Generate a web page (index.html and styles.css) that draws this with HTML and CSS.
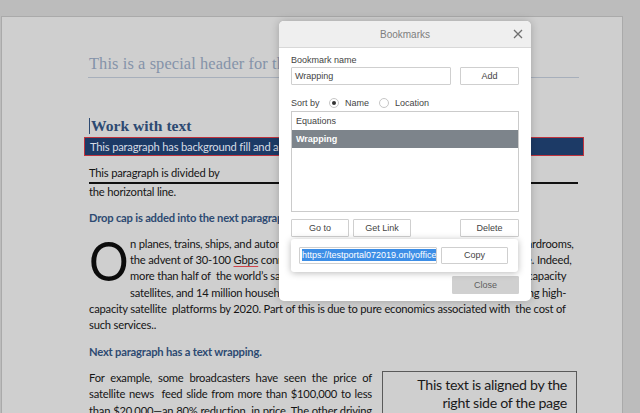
FILE: index.html
```html
<!DOCTYPE html>
<html>
<head>
<meta charset="utf-8">
<link rel="stylesheet" href="styles.css">
</head>
<body>
<div class="canvas">
  <div class="page">
    <div class="doc-header">This is a special header for the whole document</div>
    <h1 class="h-work"><span class="caret"></span>Work with text</h1>
    <p class="fill">This paragraph has background fill and a border applied to it.</p>
    <p class="plain first-plain">This paragraph is divided by</p>
    <div class="rule"></div>
    <p class="plain">the horizontal line.</p>
    <h2 class="sub">Drop cap is added into the next paragraph.</h2>
    <p class="drop-para"><span class="dropcap">O</span>n planes, trains, ships, and automobiles, in airports, in hotel lobbies, and corporate boardrooms,<br>the advent of 30-100 <span class="spell">Gbps</span> connectivity is changing the ways all people communicate. Indeed,<br>more than half of&nbsp; the world’s satellite operators are now planning on launching high-capacity<br>satellites, and 14 million households and businesses around the world will now be using high-<br>capacity satellite&nbsp; platforms by 2020. Part of this is due to pure economics associated with&nbsp; the cost of<br>such services..</p>
    <h2 class="sub sub-2">Next paragraph has a text wrapping.</h2>
    <div class="wrap">
      <p class="justified">For example, some broadcasters have seen the price of satellite news&nbsp; feed slide from more than $100,000 to less than $20,000—an 80% reduction&nbsp; in price. The other driving force is the growth of demand.</p>
      <div class="aside">This text is aligned by the<br>right side of the page</div>
    </div>
  </div>
</div>

<div class="dialog">
  <div class="dlg-head">
    <span class="dlg-title">Bookmarks</span>
    <svg class="dlg-close" width="10" height="10" viewBox="0 0 10 10"><path d="M1 1L9 9M9 1L1 9" stroke="#6f6f6f" stroke-width="1.3" fill="none"/></svg>
  </div>
  <div class="dlg-body">
    <div class="label">Bookmark name</div>
    <div class="row">
      <div class="input name-input">Wrapping</div>
      <div class="btn btn-add">Add</div>
    </div>
    <div class="sort-row">
      <span class="sort-label">Sort by</span>
      <span class="radio checked"></span><span class="radio-text">Name</span>
      <span class="radio"></span><span class="radio-text">Location</span>
    </div>
    <div class="list">
      <div class="item">Equations</div>
      <div class="item selected">Wrapping</div>
    </div>
    <div class="row actions">
      <div class="btn btn-sm">Go to</div>
      <div class="btn btn-sm btn-link">Get Link</div>
      <div class="btn btn-del">Delete</div>
    </div>
    <div class="footer">
      <div class="btn btn-close">Close</div>
    </div>
  </div>
  <div class="popover">
    <div class="input link-input"><span class="sel">https://testportal072019.onlyoffice.</span></div>
    <div class="btn btn-copy">Copy</div>
  </div>
</div>
</body>
</html>
```

FILE: styles.css
```css
html, body {
  margin: 0;
  padding: 0;
}
body {
  width: 640px;
  height: 413px;
  overflow: hidden;
  background: #bcbcbc;
  position: relative;
}
.canvas {
  padding-top: 16px;
  padding-left: 1px;
}
.page {
  width: 622px;
  height: 420px;
  background: #cfcfcf;
  border: 1px solid #aaaaaa;
  border-bottom: none;
  padding: 37px 43px 0 87px;
  box-sizing: border-box;
  font-family: Lato, "Open Sans", sans-serif;
  font-size: 11.2px;
  letter-spacing: -0.2px;
  line-height: 16.3px;
  color: #151515;
}
.page p, .page h1, .page h2 {
  margin: 0;
}
.doc-header {
  font-family: "Liberation Serif", serif;
  font-size: 16.4px;
  letter-spacing: 0.1px;
  line-height: 20px;
  color: #8593a9;
  white-space: nowrap;
  overflow: hidden;
  padding-bottom: 3px;
  margin-left: -1px;
  padding-left: 1px;
  border-bottom: 1px solid #a7afbb;
}
.h-work {
  margin-top: 39px !important;
  font-family: "Liberation Serif", serif;
  font-weight: bold;
  font-size: 15.6px;
  letter-spacing: 0;
  line-height: 18px;
  color: #2d4a72;
  display: flex;
  align-items: center;
}
.caret {
  display: inline-block;
  width: 1px;
  height: 16px;
  background: #2d4a72;
  margin-right: 1px;
}
.fill {
  margin: 2px -5px 0 -5px !important;
  background: #1c3a66;
  border: 1px solid #c0333d;
  color: #d6dce5;
  line-height: 17px;
  padding-left: 5px;
  white-space: nowrap;
  overflow: hidden;
}
.plain {
  white-space: nowrap;
}
.first-plain {
  margin-top: 9px !important;
}
.rule {
  height: 2px;
  background: #111;
  margin: 1px 1px 0 0;
}
.sub {
  margin-top: 9px !important;
  font-size: 11.2px;
  line-height: 16.3px;
  font-weight: bold;
  color: #2d4a72;
  white-space: nowrap;
}
.drop-para {
  margin-top: 10px !important;
  white-space: nowrap;
}
.dropcap {
  float: left;
  font-size: 55px;
  letter-spacing: 0;
  line-height: 46px;
  height: 48px;
  margin: 1px 2px 0 0;
  color: #0c0c0c;
  transform: scaleX(0.9);
  transform-origin: left center;
  width: 39px;
}
.spell {
  text-decoration: underline;
  text-decoration-color: #d0434a;
  text-underline-offset: 2px;
}
.sub-2 {
  margin-top: 10px !important;
}
.wrap {
  display: flex;
  margin-top: 10px;
  gap: 10px;
}
.justified {
  width: 283px;
  text-align: justify;
  flex: none;
}
.aside {
  width: 195px;
  height: 60px;
  margin-top: 1px;
  box-sizing: border-box;
  border: 1px solid #5a5a5a;
  text-align: right;
  font-size: 14.2px;
  letter-spacing: -0.3px;
  line-height: 18px;
  padding: 4px 9px 0 0;
  color: #1a1a1a;
}

/* dialog */
.dialog {
  position: absolute;
  left: 279px;
  top: 21px;
  width: 252px;
  height: 280px;
  background: #ffffff;
  border-radius: 5px;
  box-shadow: 0 0 9px rgba(0,0,0,0.22);
  font-family: "Liberation Sans", Arial, sans-serif;
  font-size: 9px;
  color: #444;
}
.dlg-head {
  height: 26px;
  background: #efefef;
  border-bottom: 1px solid #d8d8d8;
  border-radius: 5px 5px 0 0;
  display: flex;
  align-items: center;
  justify-content: center;
  position: relative;
}
.dlg-title {
  font-size: 10px;
  color: #7e7e7e;
}
.dlg-close {
  position: absolute;
  right: 8px;
  top: 8px;
}
.dlg-body {
  padding: 6px 12px 0 12px;
}
.label {
  line-height: 13px;
  height: 13px;
}
.row {
  display: flex;
  justify-content: space-between;
}
.input {
  box-sizing: border-box;
  height: 18px;
  border: 1px solid #cfcfcf;
  border-radius: 1px;
  background: #fff;
  line-height: 16px;
  padding-left: 3px;
  overflow: hidden;
  white-space: nowrap;
}
.name-input {
  width: 160px;
}
.btn {
  box-sizing: border-box;
  height: 18px;
  border: 1px solid #cfcfcf;
  border-radius: 1px;
  background: #fff;
  line-height: 16px;
  text-align: center;
  color: #444;
}
.btn-add {
  width: 59px;
}
.sort-row {
  margin-top: 10px;
  height: 16px;
  display: flex;
  align-items: center;
}
.sort-label {
  width: 38px;
}
.radio {
  width: 10px;
  height: 10px;
  border: 1px solid #c6c6c6;
  border-radius: 50%;
  box-sizing: border-box;
  position: relative;
  margin-right: 6px;
}
.radio.checked::after {
  content: "";
  position: absolute;
  left: 2px;
  top: 2px;
  width: 4px;
  height: 4px;
  border-radius: 50%;
  background: #333;
}
.radio-text {
  margin-right: 10px;
}
.list {
  height: 101px;
  box-sizing: border-box;
  border: 1px solid #cbcbcb;
}
.item {
  height: 18px;
  line-height: 18px;
  padding-left: 4px;
  color: #444;
}
.item.selected {
  background: #7d848b;
  color: #fff;
  font-weight: bold;
}
.actions {
  margin-top: 7px;
}
.btn-sm {
  width: 58px;
}
.btn-link {
  margin-left: 4px;
}
.btn-del {
  width: 59px;
  margin-left: auto;
}
.footer {
  margin-top: 39px;
  display: flex;
  justify-content: flex-end;
}
.btn-close {
  width: 67px;
  background: #d0d0d0;
  border-color: #d0d0d0;
  color: #5e5e5e;
}
.popover {
  position: absolute;
  left: 12px;
  top: 218px;
  width: 227px;
  height: 33px;
  box-sizing: border-box;
  background: #fff;
  border-radius: 3px;
  box-shadow: 0 1px 7px rgba(0,0,0,0.28);
  display: flex;
  align-items: center;
  padding-left: 8px;
}
.link-input {
  width: 138px;
  height: 17px;
  padding-left: 2px;
  line-height: 15px;
}
.sel {
  background: #3d8ee6;
  color: #fff;
  padding: 1px 0;
}
.btn-copy {
  width: 67px;
  height: 17px;
  line-height: 15px;
  margin-left: 4px;
}
```
